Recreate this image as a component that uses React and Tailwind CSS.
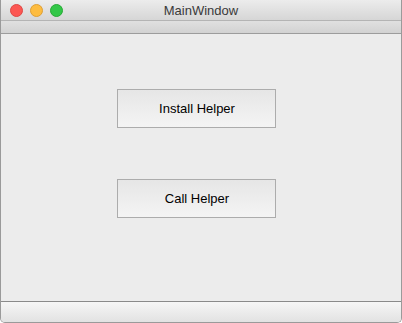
export default function App() {
  return (
    <div className="w-[402px] h-[323px] bg-white font-['Liberation_Sans',Arial,sans-serif]">
      <div className="w-full h-full flex flex-col border-x border-b border-[#9a9a9a] rounded-b-[5px] overflow-hidden bg-[#ececec]">
        {/* TITLE BAR */}
        <div className="relative h-[21px] flex items-center justify-center bg-gradient-to-b from-[#ececec] to-[#d6d6d6] border-b border-[#b4b4b4]">
          <div className="absolute left-[9px] top-[4px] flex gap-[7px]">
            <span className="w-[13px] h-[13px] rounded-full bg-[#fc5753] border border-[#df4744]" />
            <span className="w-[13px] h-[13px] rounded-full bg-[#fdbc40] border border-[#de9f34]" />
            <span className="w-[13px] h-[13px] rounded-full bg-[#33c748] border border-[#27aa35]" />
          </div>
          <span className="text-[13px] text-[#3a3a3a] leading-none">MainWindow</span>
        </div>

        {/* TOOLBAR */}
        <div className="h-[13px] bg-gradient-to-b from-[#e0e0e0] to-[#d2d2d2] border-b border-[#9c9c9c]" />

        {/* CONTENT */}
        <div className="flex-1 flex flex-col items-start pl-[116px] pt-[55px] gap-[51px] bg-[#ececec]">
          <button className="w-[159px] h-[39px] border border-[#acacac] bg-gradient-to-b from-[#e6e6e6] to-[#f4f4f4] text-[13px] text-black pl-[1px]">
            Install Helper
          </button>
          <button className="w-[159px] h-[39px] border border-[#acacac] bg-gradient-to-b from-[#e6e6e6] to-[#f4f4f4] text-[13px] text-black pl-[1px]">
            Call Helper
          </button>
        </div>

        {/* STATUS BAR */}
        <div className="h-[21px] bg-gradient-to-b from-[#f6f6f6] to-[#e2e2e2] border-t border-[#8a8a8a]" />
      </div>
    </div>
  );
}
